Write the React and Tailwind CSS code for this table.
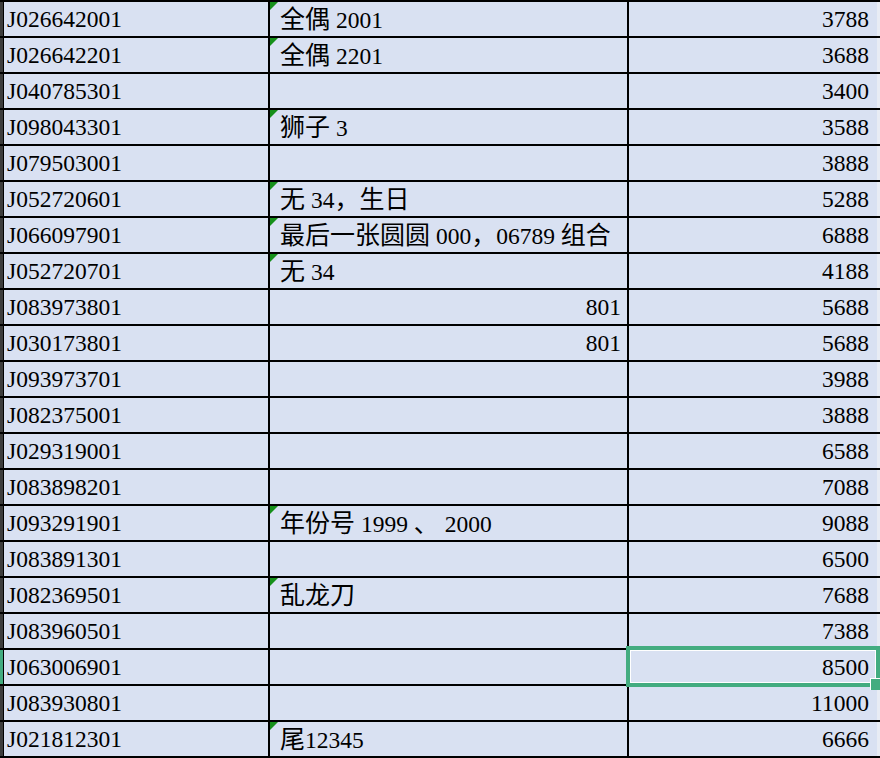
import React from "react";

const rows = [
  ["J026642001", "全偶 2001", "3788", true],
  ["J026642201", "全偶 2201", "3688", true],
  ["J040785301", "", "3400", false],
  ["J098043301", "狮子 3", "3588", true],
  ["J079503001", "", "3888", false],
  ["J052720601", "无 34，生日", "5288", true],
  ["J066097901", "最后一张圆圆 000，06789 组合", "6888", true],
  ["J052720701", "无 34", "4188", true],
  ["J083973801", "801", "5688", false, true],
  ["J030173801", "801", "5688", false, true],
  ["J093973701", "", "3988", false],
  ["J082375001", "", "3888", false],
  ["J029319001", "", "6588", false],
  ["J083898201", "", "7088", false],
  ["J093291901", "年份号 1999 、 2000", "9088", true],
  ["J083891301", "", "6500", false],
  ["J082369501", "乱龙刀", "7688", true],
  ["J083960501", "", "7388", false],
  ["J063006901", "", "8500", false],
  ["J083930801", "", "11000", false],
  ["J021812301", "尾12345", "6666", true],
];

function Mixed({ text }) {
  const parts = text.split(/([\u3000-\u303f\u4e00-\u9fff\uff00-\uffef]+)/);
  return (
    <span className="whitespace-pre">
      {parts.map((p, i) =>
        /[\u3000-\u303f\u4e00-\u9fff\uff00-\uffef]/.test(p) ? (
          <span key={i} className="text-[25px]">{p}</span>
        ) : (
          <span key={i}>{p}</span>
        )
      )}
    </span>
  );
}

export default function App() {
  return (
    <div className="relative w-[880px] h-[758px] overflow-hidden bg-[#d9e1f2] text-black text-[23.5px] font-['Liberation_Serif','Noto_Sans_CJK_SC',serif]">
      <div className="flex flex-col">
        {rows.map((r, i) => {
          const sel = i === 18;
          return (
            <div key={i} className="flex h-[36px] border-t-2 border-black">
              <div className={`w-[3px] shrink-0 ${sel ? "bg-[#43ac80]" : "bg-[#3d3d3d]"}`} />
              <div className="w-[1px] shrink-0 bg-black" />
              <div className="w-[264px] shrink-0 flex items-center pl-[3px] pt-[1px] leading-none">
                {r[0]}
              </div>
              <div className="w-[2px] shrink-0 bg-black" />
              <div
                className={`relative w-[357px] shrink-0 flex items-center pt-[1px] leading-none ${
                  r[4] ? "justify-end pr-[6px]" : "pl-[10px]"
                }`}
              >
                {r[3] && (
                  <div className="absolute left-0 top-0 w-0 h-0 border-t-[8px] border-t-[#16901a] border-r-[8px] border-r-transparent" />
                )}
                {r[1] && <Mixed text={r[1]} />}
              </div>
              <div className="w-[2px] shrink-0 bg-black" />
              <div className="w-[248px] shrink-0 flex items-center justify-end pr-[8px] pt-[1px] leading-none">
                {r[2]}
              </div>
              <div className="flex-1 bg-[#e8ecf4]" />
            </div>
          );
        })}
        <div className="h-[2px] bg-black" />
      </div>
      <div className="absolute left-[626px] top-[646px] w-[254px] h-[41px] border-4 border-[#43ac80]">
        <div className="w-full h-full border border-white" />
      </div>
      <div className="absolute left-[870px] top-[678px] w-[10px] h-[12px] bg-[#43ac80] border-l border-t border-white" />
    </div>
  );
}
